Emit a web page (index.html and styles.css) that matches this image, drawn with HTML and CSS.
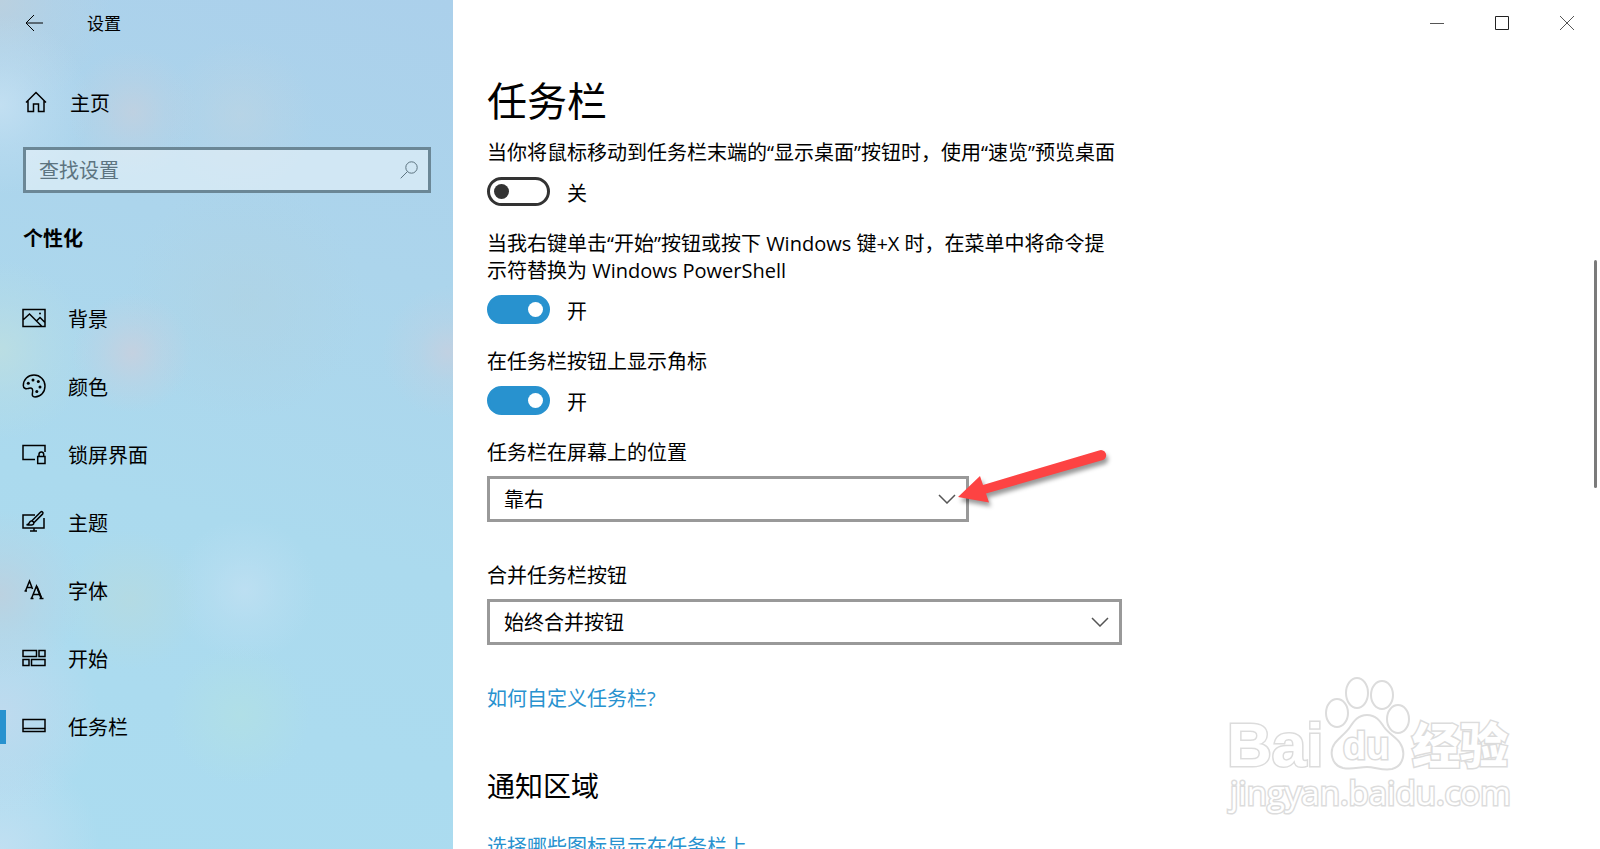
FILE: index.html
```html
<!DOCTYPE html>
<html lang="zh-CN">
<head>
<meta charset="utf-8">
<meta name="viewport" content="width=device-width, initial-scale=1">
<title>设置</title>
<link rel="stylesheet" href="styles.css">
</head>
<body>
<div class="window">
  <aside class="sidebar">
    <header class="titlebar">
      <button class="back" type="button" aria-label="后退">
        <svg width="18" height="18" viewBox="0 0 18 18"><path d="M9 1 1 9l8 8M1 9h17"/></svg>
      </button>
      <span class="app-title">设置</span>
    </header>
    <a class="home" href="#home">
      <svg class="icon" width="24" height="24" viewBox="0 0 24 24"><path d="M2 12.500 12 2.500l10 10M4 11v10.500h5.500V14h5v7.500H20V11"/></svg>
      <span>主页</span>
    </a>
    <form class="search">
      <input class="search-input" type="text" placeholder="查找设置" aria-label="查找设置">
      <button class="search-button" type="button" aria-label="搜索">
        <svg width="18" height="18" viewBox="0 0 18 18"><circle cx="11.500" cy="6.500" r="5.700"/><path d="M7.500 10.500.7 17.300"/></svg>
      </button>
    </form>
    <h2 class="category">个性化</h2>
    <nav class="nav">
      <a class="nav-item" href="#background">
        <svg class="icon" width="24" height="24" viewBox="0 0 24 24"><path d="M1 3.500h22v17H1zM1 14l6.500-6 12 12M14.500 15l3.500-3.500 5 5"/><circle class="dot" cx="18" cy="7.500" r="1"/></svg>
        <span>背景</span>
      </a>
      <a class="nav-item" href="#colors">
        <svg class="icon" width="24" height="24" viewBox="0 0 24 24"><path d="M1.300 11.500C1.300 5.500 6 1 12 1s11 4.800 11 11-4.300 11-10 11c-2.500 0-3-1.700-2.600-3.500.5-2.300.8-3.500-.2-4.800-1.200-1.400-2.400-.7-4-.3-2.500.7-4.900-.2-4.900-2.900z"/><circle class="dot" cx="6.300" cy="9.200" r="1.500"/><circle class="dot" cx="11" cy="6" r="1.500"/><circle class="dot" cx="16.300" cy="7.500" r="1.500"/><circle class="dot" cx="18" cy="13" r="1.500"/><circle class="dot" cx="14.800" cy="17.500" r="1.500"/></svg>
        <span>颜色</span>
      </a>
      <a class="nav-item" href="#lock">
        <svg class="icon" width="24" height="24" viewBox="0 0 24 24"><path d="M13 17.500H1v-14h22V10M15.700 14.500h7.300v7h-7.300zM17 14.500v-2.200a2.300 2.300 0 0 1 4.700 0v2.200"/></svg>
        <span>锁屏界面</span>
      </a>
      <a class="nav-item" href="#themes">
        <svg class="icon" width="24" height="24" viewBox="0 0 24 24"><path d="M13 5H1v13h21V8M12 18v3M8 21h7M4.500 14.800c2-.2 2.500-1 3-2.300.6-1.500 2.800-2 3.800-.8 1.200 1.500.3 3.100-1.700 3.300-2 .2-3 .1-5.100-.2zM9.700 11l9-9c1.200-1 3 .5 2 1.900l-8.800 8.800"/></svg>
        <span>主题</span>
      </a>
      <a class="nav-item" href="#fonts">
        <svg class="icon" width="24" height="24" viewBox="0 0 24 24"><path d="M3.500 13 7.500 3l3 8M5 9.500h5M9.500 20.500l5-12.500 5 12.500M11.300 16.500h6.500M2.500 13h2.500M8.500 20.500h3M17.500 20.500h4"/><path class="bold-stroke" d="m14.800 8.700 4.400 11"/></svg>
        <span>字体</span>
      </a>
      <a class="nav-item" href="#start">
        <svg class="icon" width="24" height="24" viewBox="0 0 24 24"><path d="M1 4.500h13.500v6H1zM17 4.500h6v6h-6zM1 13.500h6v6H1zM9.500 13.500H23v6H9.500z"/></svg>
        <span>开始</span>
      </a>
      <a class="nav-item active" href="#taskbar" aria-current="page">
        <svg class="icon" width="24" height="24" viewBox="0 0 24 24"><path d="M1 5.500h22v12H1zM1 14.500h22"/></svg>
        <span>任务栏</span>
      </a>
    </nav>
  </aside>

  <main class="content">
    <div class="window-controls">
      <button type="button" aria-label="最小化"><svg width="16" height="16" viewBox="0 0 16 16"><path d="M1 8.500h14"/></svg></button>
      <button class="maximize" type="button" aria-label="最大化"><svg width="16" height="16" viewBox="0 0 16 16"><path d="M1.500 1.500h13v13h-13z"/></svg></button>
      <button type="button" aria-label="关闭"><svg width="16" height="16" viewBox="0 0 16 16"><path d="m1 1 14 14M15 1 1 15"/></svg></button>
    </div>

    <h1 class="page-title">任务栏</h1>

    <section class="settings">
      <div class="setting">
        <label for="peek">当你将鼠标移动到任务栏末端的“显示桌面”按钮时，使用“速览”预览桌面</label>
        <div class="toggle-row"><input class="toggle" id="peek" type="checkbox" role="switch"><span>关</span></div>
      </div>
      <div class="setting">
        <label for="powershell">当我右键单击“开始”按钮或按下 Windows 键+X 时，在菜单中将命令提示符替换为 Windows PowerShell</label>
        <div class="toggle-row"><input class="toggle" id="powershell" type="checkbox" role="switch" checked><span>开</span></div>
      </div>
      <div class="setting">
        <label for="badges">在任务栏按钮上显示角标</label>
        <div class="toggle-row"><input class="toggle" id="badges" type="checkbox" role="switch" checked><span>开</span></div>
      </div>
      <div class="setting choice">
        <label for="position">任务栏在屏幕上的位置</label>
        <div class="select-box narrow">
          <select id="position"><option>靠左</option><option>顶部</option><option selected>靠右</option><option>底部</option></select>
          <svg class="chevron" width="18" height="10" viewBox="0 0 18 10"><path d="m1 1 8 8 8-8"/></svg>
          <svg class="arrow" width="164" height="76" viewBox="0 0 164 76"><path d="M8 53 30 32l3 9L149 6.500a5 5 0 0 1 4 9.500L36 49.500l3 9z"/></svg>
        </div>
      </div>
      <div class="setting choice">
        <label for="combine">合并任务栏按钮</label>
        <div class="select-box">
          <select id="combine"><option>始终合并按钮</option><option>任务栏已满时</option><option>从不</option></select>
          <svg class="chevron" width="18" height="10" viewBox="0 0 18 10"><path d="m1 1 8 8 8-8"/></svg>
        </div>
      </div>
      <a class="link" href="#help">如何自定义任务栏?</a>
    </section>

    <section class="notifications">
      <h2 class="section-title">通知区域</h2>
      <a class="link" href="#icons">选择哪些图标显示在任务栏上</a>
    </section>
    <div class="scroll-thumb"></div>
  </main>

  <svg class="watermark" width="320" height="170" viewBox="0 0 320 170" role="img" aria-label="Baidu 经验">
    <text class="wm-brand" x="17" y="106">Bai</text>
    <ellipse cx="127" cy="53" rx="11" ry="14"/>
    <ellipse cx="147" cy="33" rx="11" ry="15"/>
    <ellipse cx="172" cy="35" rx="11" ry="14"/>
    <ellipse cx="188" cy="59" rx="11" ry="14"/>
    <path d="M157 55c-9 0-13 6-17 12s-10 10-15 16c-6 8-4 22 8 25 9 2 16-1 24-1s16 4 25 2c12-3 14-17 8-26-4-6-11-9-16-16-4-6-8-12-17-12z"/>
    <text class="wm-du" x="133" y="99">du</text>
    <text class="wm-cn" x="202" y="103">经验</text>
    <text class="wm-url" x="20" y="145">jingyan.baidu.com</text>
  </svg>
</div>
</body>
</html>
```
FILE: styles.css
```css
* {
  box-sizing: border-box;
}

body {
  margin: 0;
  overflow: hidden;
  background: #fff;
  color: #000;
  font: 20px/27px "Open Sans", "Noto Sans CJK SC", sans-serif;
}

button,
input,
select {
  font: inherit;
  color: inherit;
}

button {
  padding: 0;
  border: 0;
  background: none;
}

a {
  color: inherit;
  text-decoration: none;
}

svg {
  display: block;
  fill: none;
  stroke: currentColor;
}

.window {
  position: relative;
  display: grid;
  grid-template-columns: 453px 1fr;
  height: 100vh;
}

/* Sidebar */

.sidebar {
  display: flex;
  flex-direction: column;
  background:
    radial-gradient(circle at 133px 112px, rgb(196 208 222 / 75%) 0, rgb(196 208 222 / 30%) 32px, transparent 64px),
    radial-gradient(circle at 240px 115px, rgb(190 212 226 / 60%) 0, rgb(190 212 226 / 25%) 40px, transparent 76px),
    radial-gradient(circle at 0 105px, rgb(196 224 242 / 90%) 0, rgb(196 224 242 / 40%) 40px, transparent 90px),
    radial-gradient(circle at 0 0, rgb(188 208 222 / 90%) 0, rgb(188 208 222 / 30%) 55px, transparent 110px),
    radial-gradient(circle at 132px 353px, rgb(200 208 222 / 85%) 0, rgb(200 208 222 / 35%) 30px, transparent 60px),
    radial-gradient(circle at 0 350px, rgb(188 222 226 / 90%) 0, rgb(188 222 226 / 35%) 45px, transparent 90px),
    radial-gradient(circle at 448px 352px, rgb(196 208 224 / 85%) 0, rgb(196 208 224 / 30%) 30px, transparent 66px),
    radial-gradient(circle at 245px 300px, rgb(176 210 226 / 60%) 0, transparent 120px),
    radial-gradient(circle at 0 595px, rgb(190 208 222 / 85%) 0, rgb(190 208 222 / 35%) 40px, transparent 84px),
    radial-gradient(circle at 130px 600px, rgb(182 218 224 / 75%) 0, transparent 70px),
    radial-gradient(circle at 245px 590px, rgb(192 224 242 / 80%) 0, rgb(192 224 242 / 35%) 35px, transparent 72px),
    radial-gradient(circle at 240px 715px, rgb(178 224 228 / 75%) 0, transparent 70px),
    radial-gradient(circle at 0 715px, rgb(194 218 238 / 85%) 0, transparent 100px),
    radial-gradient(circle at 0 849px, rgb(196 224 242 / 85%) 0, transparent 100px),
    linear-gradient(195deg, #abd0eb 0, #acd5ec 30%, #abdaee 60%, #abdcf0 100%);
}

.titlebar {
  display: flex;
  align-items: center;
  gap: 44px;
  height: 46px;
  padding-left: 25px;
  font-size: 17px;
}

.home {
  display: flex;
  align-items: center;
  gap: 22px;
  height: 68px;
  margin-top: 23px;
  padding-left: 24px;
}

.icon {
  flex: none;
  margin-bottom: 2px;
  stroke-width: 1.500;
}

.icon .dot {
  fill: currentColor;
  stroke: none;
}

.icon .bold-stroke {
  stroke-width: 2;
}

.search {
  display: flex;
  align-items: center;
  height: 46px;
  margin: 10px 22px 0 23px;
  padding-right: 8px;
  border: 3px solid #6b8796;
  background: rgb(255 255 255 / 45%);
  background-clip: padding-box;
  color: #5d7480;
}

.search-input {
  flex: 1;
  min-width: 0;
  padding: 0 0 0 13px;
  border: 0;
  outline: 0;
  background: none;
}

.search-input::placeholder {
  color: #5d7480;
}

.search-button {
  padding: 2px;
}

.category {
  margin: 32px 0 33px 23px;
  font-size: 20px;
  font-weight: 700;
  line-height: 27px;
}

.nav-item {
  display: flex;
  align-items: center;
  gap: 22px;
  height: 68px;
  padding-left: 22px;
}

.nav-item.active {
  background: linear-gradient(#2892cf, #2892cf) left center / 6px 34px no-repeat;
}

/* Content */

.content {
  position: relative;
  min-width: 0;
  padding-left: 34px;
  overflow: hidden;
}

.window-controls {
  display: flex;
  justify-content: flex-end;
  height: 46px;
  padding-right: 1px;
  color: #555;
}

.window-controls button {
  display: grid;
  place-items: center;
  width: 65px;
}

.window-controls .maximize {
  color: #222;
}

.page-title {
  margin: 28px 0 11px;
  font-size: 40px;
  font-weight: 400;
  line-height: 54px;
}

.settings {
  display: flex;
  flex-direction: column;
  align-items: flex-start;
  gap: 24px;
  max-width: 635px;
}

.setting {
  display: flex;
  flex-direction: column;
  gap: 11px;
  width: 100%;
}

.setting label {
  max-width: 630px;
}

.choice {
  gap: 10px;
  padding-bottom: 16px;
}

.toggle-row {
  display: flex;
  align-items: center;
  gap: 17px;
  height: 29px;
}

.toggle-row span {
  padding-top: 3px;
}

.toggle {
  appearance: none;
  display: flex;
  align-items: center;
  width: 63px;
  height: 29px;
  margin: 0;
  padding: 0 4px;
  border: 3px solid #333;
  border-radius: 15px;
}

.toggle::before {
  content: "";
  width: 15px;
  height: 15px;
  border-radius: 50%;
  background: #333;
}

.toggle:checked {
  justify-content: flex-end;
  border-color: #2892cf;
  background: #2892cf;
}

.toggle:checked::before {
  background: #fff;
}

.select-box {
  position: relative;
}

.select-box.narrow {
  max-width: 482px;
}

.select-box select {
  appearance: none;
  display: block;
  width: 100%;
  height: 46px;
  padding: 0 48px 0 14px;
  border: 3px solid #999;
  border-radius: 0;
  background: #fff;
}

.chevron {
  position: absolute;
  top: 18px;
  right: 13px;
  color: #555;
  stroke-width: 1.500;
  pointer-events: none;
}

.arrow {
  position: absolute;
  top: -32px;
  left: calc(100% - 19px);
  fill: #fd4343;
  stroke: none;
  filter: drop-shadow(2px 4px 2px rgb(0 0 0 / 40%));
  pointer-events: none;
}

.link {
  color: #2892cf;
}

.section-title {
  margin: 55px 0 28px;
  font-size: 28px;
  font-weight: 400;
  line-height: 38px;
}

.scroll-thumb {
  position: absolute;
  top: 260px;
  right: 3px;
  width: 3px;
  height: 228px;
  border-radius: 2px;
  background: #7a7a7a;
}

/* Watermark */

.watermark {
  position: absolute;
  right: 70px;
  bottom: 19px;
  fill: #fff;
  stroke: #dcdcdc;
  stroke-width: 2;
  pointer-events: none;
}

.watermark text {
  paint-order: stroke;
  stroke-width: 3;
  font-family: "Liberation Sans", "Noto Sans CJK SC", sans-serif;
  font-weight: 700;
}

.watermark .wm-brand {
  font-size: 62px;
}

.watermark .wm-du {
  font-size: 38px;
}

.watermark .wm-cn {
  font-size: 48px;
  font-weight: 900;
}

.watermark .wm-url {
  font-family: "Open Sans", sans-serif;
  font-size: 33px;
  font-weight: 400;
}
```
